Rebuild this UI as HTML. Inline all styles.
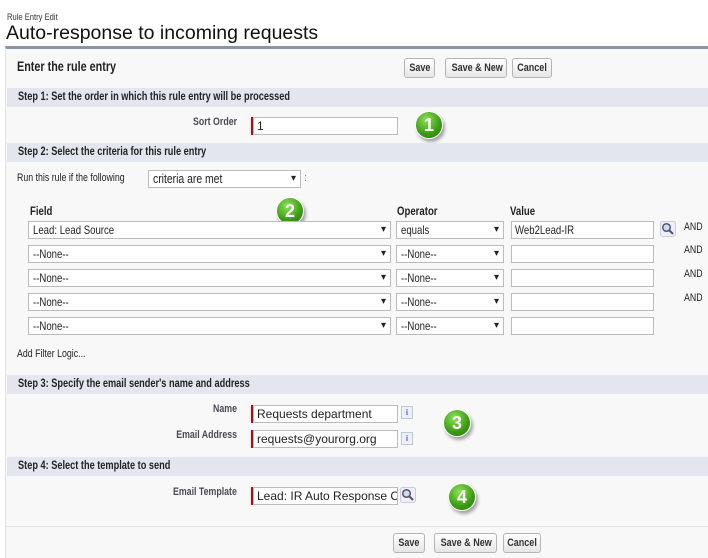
<!DOCTYPE html>
<html><head><style>
body{margin:0;width:708px;height:555px;overflow:hidden;background:#fff;font-family:"Liberation Sans",Arial,sans-serif;color:#222;position:relative}
.a{position:absolute}
.t{font-size:11px;white-space:nowrap}
.b{font-weight:bold}
.n{display:inline-block;transform:scaleX(.8);transform-origin:0 0;white-space:nowrap}
.nr{display:inline-block;transform:scaleX(.8);transform-origin:100% 0;white-space:nowrap}
.nc{display:inline-block;transform:scaleX(.82);transform-origin:50% 0;white-space:nowrap}
.bar{position:absolute;left:7px;right:0;height:19px;background:#e3e6ef;font-size:11.5px;font-weight:bold;line-height:19px;padding-left:11px;color:#222}
.btn{position:absolute;height:20px;border:1px solid #b5b5b5;border-radius:3px;background:linear-gradient(#fff,#e6e6e6);font-size:11px;font-weight:bold;line-height:18px;text-align:center;color:#333;box-sizing:border-box}
.inp{position:absolute;height:18px;border:1px solid #bbb;background:#fff;box-sizing:border-box;font-size:12px;line-height:16px;padding-left:3px;white-space:nowrap;overflow:hidden}
.sel{position:absolute;height:18px;border:1px solid #bbb;background:#fff;box-sizing:border-box;font-size:12px;line-height:16px;padding-left:4px;white-space:nowrap}
.sel:after{content:"\25BE";position:absolute;right:4px;top:0;font-size:10px}
.req{position:absolute;width:2px;background:#c00;height:18px}
.lbl{position:absolute;font-size:11px;font-weight:bold;color:#4a4a56;text-align:right;width:200px}
.num{position:absolute;width:26px;height:26px;border-radius:50%;background:radial-gradient(circle at 40% 30%,#8fe05a,#3a9a12 60%,#2a7a0a);box-shadow:2px 3px 3px rgba(0,0,0,.35);border:1px solid #fff;color:#fff;font-weight:bold;font-size:18px;line-height:26px;text-align:center}
.info{position:absolute;width:10px;height:11px;border:1px solid #bcc;background:#eef;font-size:8px;font-weight:bold;color:#36c;text-align:center;line-height:11px}
</style></head><body>
<div class="a t" style="left:7px;top:12px;font-size:9.5px;color:#333"><span class="n">Rule Entry Edit</span></div>
<div class="a" style="left:6px;top:22px;font-size:19.5px;color:#111;white-space:nowrap">Auto-response to incoming requests</div>
<div class="a" style="left:5px;top:46px;right:0;height:509px;background:#f8f8f8;border-top:3px solid #8a93a8;border-left:1px solid #e0e0e0"></div>
<div class="a t b" style="left:17px;top:59px;font-size:13.5px"><span class="n">Enter the rule entry</span></div>
<div class="btn" style="left:404px;top:58px;width:31px"><span class="nc">Save</span></div>
<div class="btn" style="left:445px;top:58px;width:62px"><span class="nc">Save &amp; New</span></div>
<div class="btn" style="left:512px;top:58px;width:40px"><span class="nc">Cancel</span></div>
<div class="bar" style="top:88px"><span class="n">Step 1: Set the order in which this rule entry will be processed</span></div>
<div class="lbl" style="left:37px;top:116px"><span class="nr">Sort Order</span></div>
<div class="req" style="left:251px;top:117px"></div>
<div class="inp" style="left:253px;top:117px;width:145px">1</div>
<div class="num" style="left:415px;top:111px">1</div>
<div class="bar" style="top:143px"><span class="n">Step 2: Select the criteria for this rule entry</span></div>
<div class="a t" style="left:17px;top:172px;font-size:11px"><span class="n">Run this rule if the following</span></div>
<div class="sel" style="left:148px;top:170px;width:153px;font-size:13px"><span class="n">criteria are met</span></div>
<div class="a t" style="left:304px;top:172px;color:#888">:</div>
<div class="a t b" style="left:30px;top:204px;font-size:12px"><span class="n">Field</span></div>
<div class="a t b" style="left:397px;top:204px;font-size:12px"><span class="n">Operator</span></div>
<div class="a t b" style="left:510px;top:204px;font-size:12px"><span class="n">Value</span></div>
<div class="num" style="left:276px;top:197px">2</div>
<div class="sel" style="left:28px;top:221px;width:363px"><span class="n">Lead: Lead Source</span></div>
<div class="sel" style="left:396px;top:221px;width:108px"><span class="n">equals</span></div>
<div class="inp" style="left:511px;top:221px;width:143px"><span class="n">Web2Lead-IR</span></div>
<svg class="a" style="left:660px;top:221px" width="16" height="16" viewBox="0 0 16 16"><rect x="0.5" y="0.5" width="15" height="15" rx="2" fill="#eef" stroke="#ccd"/><circle cx="6.5" cy="6.5" r="3.8" fill="#cde" stroke="#556" stroke-width="1.5"/><path d="M9.5 9.5L13 13" stroke="#556" stroke-width="2"/></svg>
<div class="a t" style="left:684px;top:221px;font-size:11px"><span class="n">AND</span></div>
<div class="sel" style="left:28px;top:245px;width:363px"><span class="n">--None--</span></div>
<div class="sel" style="left:396px;top:245px;width:108px"><span class="n">--None--</span></div>
<div class="inp" style="left:511px;top:245px;width:143px"></div>
<div class="a t" style="left:684px;top:244px;font-size:11px"><span class="n">AND</span></div>
<div class="sel" style="left:28px;top:269px;width:363px"><span class="n">--None--</span></div>
<div class="sel" style="left:396px;top:269px;width:108px"><span class="n">--None--</span></div>
<div class="inp" style="left:511px;top:269px;width:143px"></div>
<div class="a t" style="left:684px;top:268px;font-size:11px"><span class="n">AND</span></div>
<div class="sel" style="left:28px;top:293px;width:363px"><span class="n">--None--</span></div>
<div class="sel" style="left:396px;top:293px;width:108px"><span class="n">--None--</span></div>
<div class="inp" style="left:511px;top:293px;width:143px"></div>
<div class="a t" style="left:684px;top:292px;font-size:11px"><span class="n">AND</span></div>
<div class="sel" style="left:28px;top:317px;width:363px"><span class="n">--None--</span></div>
<div class="sel" style="left:396px;top:317px;width:108px"><span class="n">--None--</span></div>
<div class="inp" style="left:511px;top:317px;width:143px"></div>
<div class="a t" style="left:17px;top:348px;font-size:11px;text-decoration:underline"><span class="n">Add Filter Logic...</span></div>
<div class="bar" style="top:375px"><span class="n">Step 3: Specify the email sender's name and address</span></div>
<div class="lbl" style="left:37px;top:403px"><span class="nr">Name</span></div>
<div class="req" style="left:251px;top:405px"></div>
<div class="inp" style="left:253px;top:405px;width:145px">Requests department</div>
<div class="info" style="left:401px;top:406px">i</div>
<div class="lbl" style="left:37px;top:429px"><span class="nr">Email Address</span></div>
<div class="req" style="left:251px;top:430px"></div>
<div class="inp" style="left:253px;top:430px;width:145px">requests@yourorg.org</div>
<div class="info" style="left:401px;top:432px">i</div>
<div class="num" style="left:443px;top:409px">3</div>
<div class="bar" style="top:457px"><span class="n">Step 4: Select the template to send</span></div>
<div class="lbl" style="left:37px;top:486px"><span class="nr">Email Template</span></div>
<div class="req" style="left:251px;top:487px"></div>
<div class="inp" style="left:253px;top:487px;width:145px">Lead: IR Auto Response C</div>
<svg class="a" style="left:400px;top:487px" width="16" height="16" viewBox="0 0 16 16"><rect x="0.5" y="0.5" width="15" height="15" rx="2" fill="#eef" stroke="#ccd"/><circle cx="6.5" cy="6.5" r="3.8" fill="#cde" stroke="#556" stroke-width="1.5"/><path d="M9.5 9.5L13 13" stroke="#556" stroke-width="2"/></svg>
<div class="num" style="left:448px;top:483px">4</div>
<div class="a" style="left:6px;right:0;top:526px;height:1px;background:#e4e4e4"></div>
<div class="btn" style="left:393px;top:533px;width:32px"><span class="nc">Save</span></div>
<div class="btn" style="left:434px;top:533px;width:63px"><span class="nc">Save &amp; New</span></div>
<div class="btn" style="left:503px;top:533px;width:38px"><span class="nc">Cancel</span></div>
</body></html>
